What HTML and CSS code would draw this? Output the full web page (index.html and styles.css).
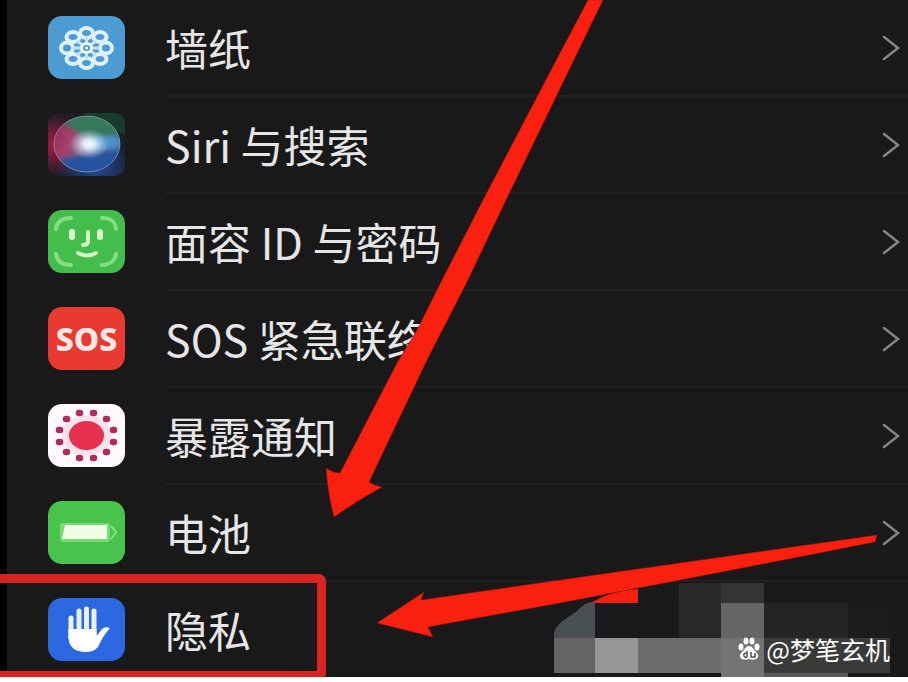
FILE: index.html
```html
<!DOCTYPE html>
<html lang="zh-CN">
<head>
    <meta charset="UTF-8">
    <meta name="viewport" content="width=device-width, initial-scale=1.0">
    <title>设置</title>
    <link rel="stylesheet" href="styles.css">
</head>
<body>
    <main class="panel">
        <ul class="settings">
            <li>
                <a class="row" href="#wallpaper">
                    <svg class="icon wallpaper" viewBox="0 0 77 63" aria-hidden="true">
                        <g fill="none" stroke="#dff0fa" stroke-width="4">
                            <ellipse cx="38.5" cy="17" rx="6.5" ry="5"/>
                            <ellipse cx="52" cy="21" rx="6.5" ry="5"/>
                            <ellipse cx="58" cy="32" rx="6" ry="5.5"/>
                            <ellipse cx="52" cy="43" rx="6.5" ry="5"/>
                            <ellipse cx="38.5" cy="47" rx="6.5" ry="5"/>
                            <ellipse cx="25" cy="43" rx="6.5" ry="5"/>
                            <ellipse cx="19" cy="32" rx="6" ry="5.5"/>
                            <ellipse cx="25" cy="21" rx="6.5" ry="5"/>
                        </g>
                        <path d="M38.5 21v22M25 32h27M29 25l19 14M48 25L29 39" stroke="#c5e2f3" stroke-width="3"/>
                        <ellipse cx="38.5" cy="32" rx="5" ry="4.5" fill="#5d8fae" stroke="#eef8fd" stroke-width="3"/>
                        <circle cx="38.5" cy="32" r="1.5" fill="#fff"/>
                    </svg>
                    <span class="label">墙纸</span>
                    <svg class="chevron" viewBox="0 0 18 26" aria-hidden="true"><path d="M2 2l14 11L2 24"/></svg>
                </a>
            </li>
            <li>
                <a class="row" href="#siri">
                    <svg class="icon siri" viewBox="0 0 77 63" aria-hidden="true">
                        <defs>
                            <radialGradient id="siriPink" cx="0.08" cy="0.5" r="0.5">
                                <stop offset="0" stop-color="#a81a48"/>
                                <stop offset="1" stop-color="#a81a48" stop-opacity="0"/>
                            </radialGradient>
                            <radialGradient id="siriBlue" cx="0.62" cy="0.85" r="0.5">
                                <stop offset="0" stop-color="#244d9c"/>
                                <stop offset="1" stop-color="#244d9c" stop-opacity="0"/>
                            </radialGradient>
                            <radialGradient id="siriGlow">
                                <stop offset="0" stop-color="#fff"/>
                                <stop offset="0.3" stop-color="#e9f3ff" stop-opacity="0.9"/>
                                <stop offset="1" stop-color="#a9cdf0" stop-opacity="0"/>
                            </radialGradient>
                            <linearGradient id="siriOrb" x1="0" y1="0.3" x2="1" y2="0.6">
                                <stop offset="0" stop-color="#8f2450"/>
                                <stop offset="0.3" stop-color="#a5426d"/>
                                <stop offset="0.6" stop-color="#75698f"/>
                                <stop offset="1" stop-color="#286bb4"/>
                            </linearGradient>
                            <filter id="siriSoft"><feGaussianBlur stdDeviation="2"/></filter>
                            <clipPath id="siriClip"><ellipse cx="39" cy="31" rx="33" ry="28"/></clipPath>
                        </defs>
                        <rect width="77" height="63" fill="#1b1d27"/>
                        <path d="M34 0h43v22z" fill="#173b2c"/>
                        <rect width="77" height="63" fill="url(#siriPink)"/>
                        <rect width="77" height="63" fill="url(#siriBlue)"/>
                        <g clip-path="url(#siriClip)">
                            <rect width="77" height="63" fill="url(#siriOrb)"/>
                            <g filter="url(#siriSoft)">
                                <path d="M14 11C30 -4 68 -4 75 24C58 20 48 26 38 27C34 19 26 16 14 11z" fill="#34795c"/>
                                <path d="M42 29C52 21 66 21 75 29C66 38 52 37 42 34z" fill="#4d94c9"/>
                                <path d="M12 45C29 44 46 38 75 37V63H20z" fill="#27539f"/>
                            </g>
                        </g>
                        <ellipse cx="41" cy="31" rx="20" ry="15" fill="url(#siriGlow)"/>
                        <ellipse cx="39" cy="31" rx="33" ry="28" fill="none" stroke="#9ab3bd" stroke-opacity="0.6"/>
                    </svg>
                    <span class="label">Siri 与搜索</span>
                    <svg class="chevron" viewBox="0 0 18 26" aria-hidden="true"><path d="M2 2l14 11L2 24"/></svg>
                </a>
            </li>
            <li>
                <a class="row" href="#faceid">
                    <svg class="icon faceid" viewBox="0 0 77 63" aria-hidden="true">
                        <g fill="none" stroke="#86dd84" stroke-width="4" stroke-linecap="round">
                            <path d="M8 19C9 11 14 8 23 8M54 8C63 8 67 11 68 19M8 44C9 51 14 55 23 55M54 55C63 54 67 51 68 44"/>
                        </g>
                        <path d="M24 22v5M52 22v5" stroke="#dcf9c9" stroke-width="6" stroke-linecap="round"/>
                        <path d="M40 22v9q0 4-5 4M30 43q9 5 18 0" fill="none" stroke="#d6f8c2" stroke-width="4" stroke-linecap="round"/>
                    </svg>
                    <span class="label">面容 ID 与密码</span>
                    <svg class="chevron" viewBox="0 0 18 26" aria-hidden="true"><path d="M2 2l14 11L2 24"/></svg>
                </a>
            </li>
            <li>
                <a class="row" href="#sos">
                    <span class="icon sos" aria-hidden="true">SOS</span>
                    <span class="label">SOS 紧急联络</span>
                    <svg class="chevron" viewBox="0 0 18 26" aria-hidden="true"><path d="M2 2l14 11L2 24"/></svg>
                </a>
            </li>
            <li>
                <a class="row" href="#exposure">
                    <svg class="icon exposure" viewBox="0 0 77 63" aria-hidden="true">
                        <ellipse cx="38.5" cy="31.5" rx="25" ry="20" fill="#f9e2ea"/>
                        <ellipse cx="38.5" cy="31.5" rx="17.5" ry="14.5" fill="#e5304f"/>
                        <path d="M31 9h1M45 9h1M58 15h1M65 26h1M65 38h1M58 48h1M45 54h1M31 54h1M18 48h1M11 38h1M11 26h1M18 15h1" stroke="#b52a5c" stroke-width="6.5" stroke-linecap="round"/>
                    </svg>
                    <span class="label">暴露通知</span>
                    <svg class="chevron" viewBox="0 0 18 26" aria-hidden="true"><path d="M2 2l14 11L2 24"/></svg>
                </a>
            </li>
            <li>
                <a class="row" href="#battery">
                    <svg class="icon battery" viewBox="0 0 77 63" aria-hidden="true">
                        <rect x="12" y="22" width="50" height="19" rx="3" fill="#7ada75"/>
                        <path d="M17 24h42v14H14z" fill="#effde8"/>
                        <path d="M63 25l5 6l-5 7" fill="none" stroke="#8ae183" stroke-width="2"/>
                    </svg>
                    <span class="label">电池</span>
                    <svg class="chevron" viewBox="0 0 18 26" aria-hidden="true"><path d="M2 2l14 11L2 24"/></svg>
                </a>
            </li>
            <li>
                <a class="row" href="#privacy">
                    <svg class="icon privacy" viewBox="0 0 77 63" aria-hidden="true">
                        <g stroke="#eaf2ff" stroke-width="5" stroke-linecap="round">
                            <path d="M23 20v20M31 13v26M38.5 11v26M46 13v26"/>
                        </g>
                        <path d="M20.500 31H48.500V38L54 31Q57 28 62 30Q55 38 52 45Q49 54 38 54Q21 54 20.500 39z" fill="#fff"/>
                    </svg>
                    <span class="label">隐私</span>
                </a>
            </li>
        </ul>

        <!-- markup drawn over the list -->
        <div class="frame"></div>

        <svg class="arrows" width="908" height="677" viewBox="0 0 908 677" aria-hidden="true">
            <path d="M588 0L560 53L483 200L442 280L417 330L397 363L340 473Q333 473 326 468Q328 495 334 517Q358 500 382 487Q375 486 369 482L428 358L467 282L507 198L603 0z"/>
            <path d="M377 623L424 592L421 600L560 580L877 535L875 542L727 571L560 603L428 627L433 637z"/>
        </svg>

        <div class="watermark">
            <svg class="mosaic" viewBox="0 0 336 95" aria-hidden="true">
                <path fill="#191a1c" d="M41 21h84v35H41z"/>
                <path fill="#282829" d="M125 1h42v55h-42z"/>
                <path fill="#343435" d="M167 1h43v20h-43z"/>
                <path fill="#656566" d="M167 21h43v35h-43z"/>
                <path fill="#242424" d="M210 21h84v35h-84z"/>
                <path fill="#1b1b1b" d="M294 21h42v35h-42z"/>
                <path fill="#485054" d="M0 56V50C5 38 17 35 24 28Q32 19 41 20V56z"/>
                <path fill="#f9200f" d="M37 21Q56 9 84 7V21z"/>
                <path fill="#636466" d="M0 56h41v35H0z"/>
                <path fill="#969698" d="M41 56h43v35H41z"/>
                <path fill="#6a6b6d" d="M84 56h83v35H84z"/>
                <path fill="#737374" d="M167 56h43v39h-43z"/>
                <path fill="#3a3a3b" d="M210 56h126v35H210z"/>
                <path fill="#59595a" d="M210 91h84v4h-84z"/>
            </svg>
            <div class="credit">
                <svg class="paw" viewBox="0 0 22 24" aria-hidden="true">
                    <g fill="#fff">
                        <ellipse cx="3" cy="10" rx="2.500" ry="3.500"/>
                        <ellipse cx="8" cy="4" rx="2.500" ry="3.500"/>
                        <ellipse cx="14" cy="4" rx="2.500" ry="3.500"/>
                        <ellipse cx="19" cy="10" rx="2.500" ry="3.500"/>
                        <path d="M11 9Q14 9 16 13Q21 17 20 20Q18 24 11 22Q4 24 2 20Q1 17 6 13Q8 9 11 9z"/>
                    </g>
                    <path d="M9 14v6M9 16q-4 0-3 3q1 2 3 1M13 15v5h4v-4" fill="none" stroke="#4f4f50" stroke-width="1.500"/>
                </svg>
                <span>@梦笔玄机</span>
            </div>
        </div>
    </main>
</body>
</html>
```

FILE: styles.css
```css
body {
    margin: 0;
    background-color: #ffffff;
    font-family: "Noto Sans CJK SC", sans-serif;
}
.panel {
    position: relative;
    overflow: hidden;
    background: linear-gradient(#000000, #000000) 0 0 / 7px 100% no-repeat #191919;
}
.settings {
    list-style: none;
    margin: 0;
    padding: 0;
}
.row {
    display: flex;
    align-items: center;
    padding: 16px 8px 18px 48px;
    color: #e6e6e8;
    text-decoration: none;
    background: linear-gradient(#202123, #202123) 166px 100% / 100% 2px no-repeat;
}
.settings li:last-child .row {
    padding-bottom: 16px;
    background: none;
}
.icon {
    flex: none;
    width: 77px;
    height: 63px;
    border-radius: 14px;
    overflow: hidden;
}
.wallpaper {
    background-color: #4c9bd3;
}
.siri {
    border-radius: 10px;
}
.faceid {
    background-color: #43bd4c;
}
.sos {
    background-color: #e93a31;
    color: #ffe9e6;
    font-family: "Noto Sans", sans-serif;
    font-size: 32px;
    font-weight: 800;
    line-height: 63px;
    text-align: center;
}
.exposure {
    background-color: #fdf9fc;
}
.battery {
    background-color: #48c44c;
}
.privacy {
    background-color: #2c68e0;
}
.label {
    flex: 1;
    margin-left: 40px;
    font-size: 43px;
    line-height: 63px;
    white-space: nowrap;
}
.chevron {
    flex: none;
    width: 18px;
    height: 26px;
}
.chevron path {
    fill: none;
    stroke: #858587;
    stroke-width: 2.5;
    stroke-linecap: round;
}
.frame {
    position: absolute;
    left: 0;
    bottom: 0;
    box-sizing: border-box;
    width: 326px;
    height: 103px;
    border: 9px solid #d92320;
    border-left: none;
    border-bottom-width: 6px;
    border-radius: 0 8px 4px 0;
}
.arrows {
    position: absolute;
    top: 0;
    left: 0;
    pointer-events: none;
}
.arrows path {
    fill: #f9200f;
    stroke: #8f120a;
    stroke-opacity: 0.5;
}
.watermark {
    position: absolute;
    right: 18px;
    bottom: 0;
    width: 336px;
    height: 95px;
}
.mosaic {
    display: block;
    width: 100%;
}
.credit {
    position: absolute;
    right: 0;
    bottom: 8px;
    display: flex;
    align-items: center;
    gap: 6px;
    color: #ffffff;
    font-size: 25px;
    line-height: 40px;
    white-space: nowrap;
}
.paw {
    width: 22px;
    height: 24px;
}
```
